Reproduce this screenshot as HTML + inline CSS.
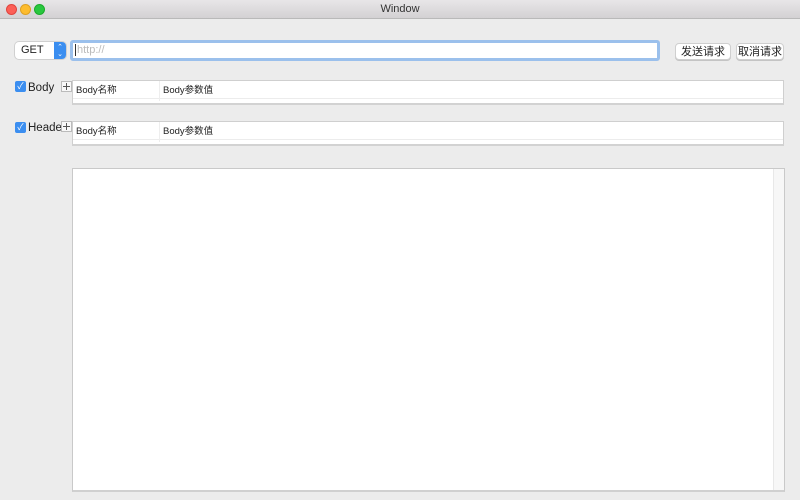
<!DOCTYPE html>
<html><head><meta charset="utf-8"><style>
*{box-sizing:border-box;margin:0;padding:0}
body{width:800px;height:500px;overflow:hidden;background:#ececec;font-family:"Liberation Sans","Noto Sans CJK SC",sans-serif;position:relative}
.tb{position:absolute;left:0;top:0;width:800px;height:19px;background:linear-gradient(#e8e6e8,#d3d1d3);border-bottom:1px solid #b9b9b9;text-align:center;font-size:11px;line-height:19px;color:#333}
.dot{position:absolute;top:4px;width:11px;height:11px;border-radius:50%}
.a{position:absolute}
.btn{position:absolute;background:#fff;border:1px solid #cfcfcf;border-radius:4px;font-size:11px;text-align:center;line-height:16px;color:#222;box-shadow:0 1px 0 #c4c4c4}
.cb{position:absolute;width:11px;height:11px;border-radius:2px;background:#3b8ef0;color:#fff;font-size:9px;line-height:11px;text-align:center}
.lbl{position:absolute;font-size:11.5px;color:#222}
.tbl{position:absolute;left:72px;width:712px;background:#fff;border:1px solid #cfcfcf;border-bottom:2px solid #d2d2d2}
.row{height:18px;border-bottom:1px solid #ececec;font-size:9.5px;line-height:20px;color:#222;position:relative}
.row span{position:absolute;top:0}
.plus{position:absolute;width:11px;height:11px;border:1px solid #bbb;background:#f8f8f8;z-index:2}
.plus:before{content:"";position:absolute;left:4px;top:1px;width:1px;height:7px;background:#555}
.plus:after{content:"";position:absolute;left:1px;top:4px;width:7px;height:1px;background:#555}
</style></head><body>
<div class="tb">Window
<div class="dot" style="left:6px;background:#fc5f57;border:1px solid #e0443e"></div>
<div class="dot" style="left:20px;background:#fdbc2e;border:1px solid #dea123"></div>
<div class="dot" style="left:34px;background:#29c73f;border:1px solid #1aab29"></div>
</div>
<div class="a" style="left:15px;top:42px;width:51px;height:17px;background:#fff;border-radius:4px;box-shadow:0 0 0 1px #d0d0d0;font-size:11px;line-height:17px;padding-left:6px;color:#222">GET
<div class="a" style="right:0;top:0;width:12px;height:17px;background:#3b8ef0;border-radius:0 4px 4px 0;color:#fff;font-size:7px;line-height:7px;text-align:center;padding-top:2px">&#8963;<br>&#8964;</div></div>
<div class="a" style="left:70px;top:40px;width:590px;height:21px;border:3px solid #9bc0ec;border-radius:3px;background:#fff;font-size:11px;color:#bbb;line-height:15px;padding-left:2px"><span style="border-left:1px solid #333;padding-left:1px">http://</span></div>
<div class="btn" style="left:675px;top:43px;width:56px;height:17px">发送请求</div>
<div class="btn" style="left:736px;top:43px;width:48px;height:17px">取消请求</div>
<div class="cb" style="left:15px;top:81px">✓</div><div class="lbl" style="left:28px;top:82px">Body</div>
<div class="plus" style="left:61px;top:81px"></div>
<div class="tbl" style="top:80px;height:25px"><div class="row"><span style="left:3px">Body名称</span><span style="left:86px;border-left:1px solid #eee;padding-left:3px">Body参数值</span></div></div>
<div class="cb" style="left:15px;top:122px">✓</div><div class="lbl" style="left:28px;top:122px">Header</div>
<div class="plus" style="left:61px;top:121px"></div>
<div class="tbl" style="top:121px;height:25px"><div class="row"><span style="left:3px">Body名称</span><span style="left:86px;border-left:1px solid #eee;padding-left:3px">Body参数值</span></div></div>
<div class="a" style="left:72px;top:168px;width:713px;height:324px;background:#fff;border:1px solid #c9c9c9;border-bottom:2px solid #d0d0d0">
<div class="a" style="right:0;top:0;width:11px;height:100%;background:#f7f7f7;border-left:1px solid #e8e8e8"></div></div>
</body></html>
